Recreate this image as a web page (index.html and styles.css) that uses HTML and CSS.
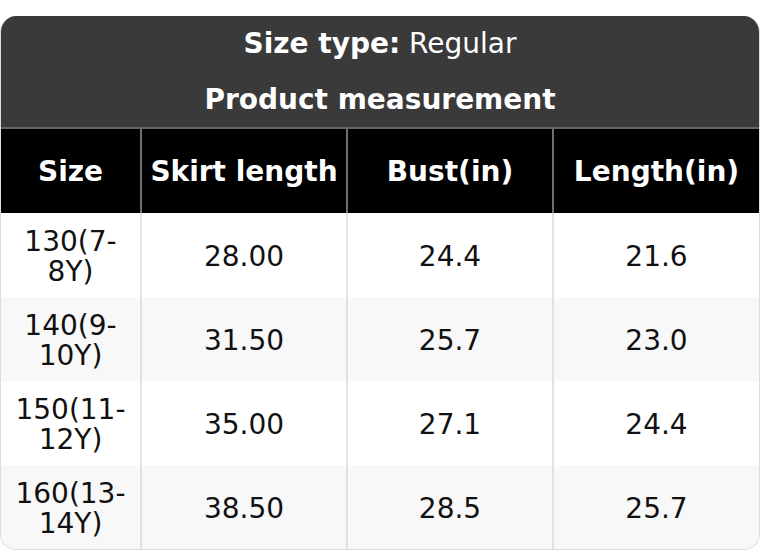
FILE: index.html
```html
<!DOCTYPE html>
<html>
<head>
<meta charset="utf-8">
<link rel="stylesheet" href="styles.css">
</head>
<body>
<div class="card">
  <div class="title">
    <div class="line"><b>Size type:</b> Regular</div>
    <div class="line"><b>Product measurement</b></div>
  </div>
  <table class="sizes">
    <colgroup>
      <col class="c1"><col class="c2"><col class="c3"><col class="c4">
    </colgroup>
    <thead>
      <tr><th>Size</th><th>Skirt length</th><th>Bust(in)</th><th>Length(in)</th></tr>
    </thead>
    <tbody>
      <tr><td>130(7-8Y)</td><td>28.00</td><td>24.4</td><td>21.6</td></tr>
      <tr class="alt"><td>140(9-10Y)</td><td>31.50</td><td>25.7</td><td>23.0</td></tr>
      <tr><td>150(11-12Y)</td><td>35.00</td><td>27.1</td><td>24.4</td></tr>
      <tr class="alt"><td>160(13-14Y)</td><td>38.50</td><td>28.5</td><td>25.7</td></tr>
    </tbody>
  </table>
</div>
</body>
</html>
```

FILE: styles.css
```css
html, body {
  margin: 0;
  padding: 0;
  background: #fff;
}
body {
  padding-top: 16px;
  font-family: "DejaVu Sans", sans-serif;
}
.card {
  border-radius: 16px;
  overflow: hidden;
  border: 1px solid #dcdcdc;
  border-top: none;
  width: 758px;
}
.title {
  background: #3a3a3a;
  color: #fff;
  text-align: center;
  font-size: 28px;
  border-bottom: 2px solid #666;
}
.title .line {
  height: 55px;
  line-height: 56px;
}
.title .line:last-child {
  height: 56px;
  line-height: 58px;
}
.sizes {
  width: 100%;
  border-collapse: collapse;
  table-layout: fixed;
}
.c1 { width: 140px; }
.c2 { width: 206px; }
.c3 { width: 206px; }
.sizes th {
  background: #000;
  color: #fff;
  font-size: 28px;
  font-weight: bold;
  height: 84px;
  padding: 0;
  border-left: 2px solid #6e6e6e;
  text-align: center;
}
.sizes td {
  height: 80px;
  padding: 4px 6px 0;
  font-size: 28px;
  line-height: 30px;
  color: #111;
  text-align: center;
  border-left: 2px solid #e2e2e2;
}
.sizes th:first-child,
.sizes td:first-child {
  border-left: none;
}
.sizes tr.alt td {
  background: #f8f8f8;
}
```
